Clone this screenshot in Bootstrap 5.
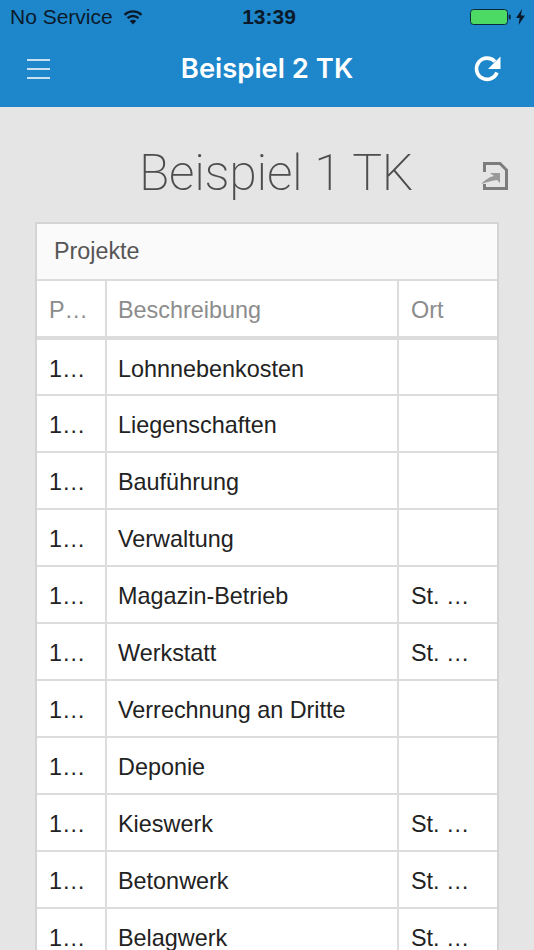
<!DOCTYPE html>
<html lang="de">
<head>
<meta charset="utf-8">
<title>Beispiel 2 TK</title>
<link href="https://cdn.jsdelivr.net/npm/bootstrap@5.3.0/dist/css/bootstrap.min.css" rel="stylesheet">
<style>
html,body{height:950px;overflow:hidden}
body{background:#e5e5e5;font-family:"Liberation Sans",Arial,sans-serif;color:#222}
.app-head{background:#1e86ca;height:107px}
.status-row{height:34px;padding:0 9px 0 10px;font-size:21px;color:#0b1a2a}
.status-side{flex:1 1 0}
.clock{font-weight:700;font-size:21px;margin-left:3px}
.wifi-mark{margin-left:2px}
.title-row{height:73px;padding:0 31px 4px 27px;color:#fff}
.app-title{font-family:Inter,"Liberation Sans",sans-serif;font-size:27.400px;font-weight:600;margin:0 0 0 11px;line-height:1}
.page-head{height:115px;padding:17px 25px 0 139px}
.page-title{font-family:Roboto,"Liberation Sans",sans-serif;font-weight:200;font-size:50px;color:#4d4d4d;margin:0;line-height:1;letter-spacing:-.3px}
.sheet{margin:0 35px;border:2px solid #d4d4d4;border-bottom:0;background:#fff}
.sheet-head{height:55px;padding-left:17px;background:#fafafa;font-size:23.300px;color:#555}
.grid-tbl{table-layout:fixed;width:100%;margin:0;border-collapse:collapse;font-size:23.400px;--bs-table-bg:#fff}
.grid-tbl th,.grid-tbl td{height:57px;padding:5px 12px 0;border:2px solid #dcdcdc;white-space:nowrap;overflow:hidden;vertical-align:middle;font-weight:400;color:#222;box-shadow:none}
.grid-tbl th:first-child,.grid-tbl td:first-child{border-left:0}
.grid-tbl th:last-child,.grid-tbl td:last-child{border-right:0}
.grid-tbl th:nth-child(2),.grid-tbl td:nth-child(2){padding-left:11px}
.grid-tbl th{color:#8c8c8c;border-bottom-width:4px;height:58px}
.c1{width:69px}.c3{width:99px}
</style>
</head>
<body>
<header class="app-head d-flex flex-column">
  <div class="status-row d-flex align-items-center">
    <div class="status-side d-flex align-items-center gap-2">
      <span>No Service</span>
      <svg class="wifi-mark" width="20" height="15" viewBox="0 0 20 15"><path d="M10 14.500 6.800 11a4.500 4.500 0 0 1 6.400 0Z" fill="#0b1a2a"/><path d="M4.500 8.200a8 8 0 0 1 11 0M1.500 4.800a12.300 12.300 0 0 1 17 0" fill="none" stroke="#0b1a2a" stroke-width="2.300"/></svg>
    </div>
    <span class="clock">13:39</span>
    <div class="status-side d-flex align-items-center justify-content-end gap-1">
      <svg width="42" height="16" viewBox="0 0 42 16"><rect x=".5" y=".5" width="37" height="15" rx="3" fill="#4cd964" stroke="#0b2a40"/><rect x="38.700" y="5.500" width="2" height="5" rx="1" fill="#0b2a40"/></svg>
      <svg width="9" height="16" viewBox="0 0 9 16"><path d="M6 0 0 9h3.600L2.600 16 9 6.600H5Z" fill="#0b1a2a"/></svg>
    </div>
  </div>
  <div class="title-row d-flex align-items-center justify-content-between">
    <svg width="23" height="20" viewBox="0 0 23 20"><path d="M0 1h23M0 10h23M0 19h23" stroke="#fff" stroke-width="1.600" fill="none"/></svg>
    <h1 class="app-title">Beispiel 2 TK</h1>
    <svg width="30" height="30" viewBox="0 0 30 30"><path d="M24 18.500A10.600 10.600 0 1 1 22 7.600" fill="none" stroke="#fff" stroke-width="3.600"/><path d="M27.500 2.500V15H15Z" fill="#fff"/></svg>
  </div>
</header>
<div class="page-head d-flex align-items-center justify-content-between">
  <h2 class="page-title">Beispiel 1 TK</h2>
  <svg class="mt-1" width="28" height="30" viewBox="0 0 28 30"><path d="M3.500 12V3.500H19L25.500 10V28.500H3.500V24" fill="none" stroke="#7d7d7d" stroke-width="3"/><path d="M9 13H19V23L16 20C10 21 5 22 0 24C4 20 8 17 13 16Z" fill="#999"/></svg>
</div>
<section class="sheet">
  <div class="sheet-head d-flex align-items-center">Projekte</div>
  <table class="table grid-tbl">
    <thead><tr><th class="c1">P…</th><th>Beschreibung</th><th class="c3">Ort</th></tr></thead>
    <tbody>
      <tr><td>1…</td><td>Lohnnebenkosten</td><td></td></tr>
      <tr><td>1…</td><td>Liegenschaften</td><td></td></tr>
      <tr><td>1…</td><td>Bauführung</td><td></td></tr>
      <tr><td>1…</td><td>Verwaltung</td><td></td></tr>
      <tr><td>1…</td><td>Magazin-Betrieb</td><td>St. …</td></tr>
      <tr><td>1…</td><td>Werkstatt</td><td>St. …</td></tr>
      <tr><td>1…</td><td>Verrechnung an Dritte</td><td></td></tr>
      <tr><td>1…</td><td>Deponie</td><td></td></tr>
      <tr><td>1…</td><td>Kieswerk</td><td>St. …</td></tr>
      <tr><td>1…</td><td>Betonwerk</td><td>St. …</td></tr>
      <tr><td>1…</td><td>Belagwerk</td><td>St. …</td></tr>
    </tbody>
  </table>
</section>
<script src="https://cdn.jsdelivr.net/npm/bootstrap@5.3.0/dist/js/bootstrap.bundle.min.js"></script>
</body>
</html>
